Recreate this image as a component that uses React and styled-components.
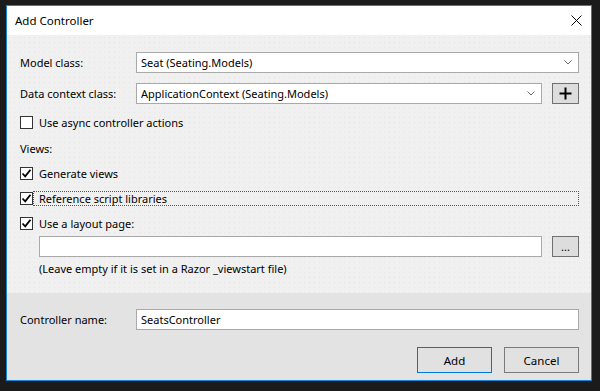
import { createGlobalStyle, styled } from 'styled-components';

const GlobalStyle = createGlobalStyle`
  html, body {
    margin: 0;
    padding: 0;
    background: #1b1b1b;
  }
  body {
    font-family: "Noto Sans", "Liberation Sans", sans-serif;
    font-size: 11px;
    color: #000;
  }
`;

const Screen = styled.div`
  width: 600px;
  height: 391px;
  padding: 5px 0 0 6px;
  box-sizing: border-box;
`;

const Dialog = styled.div`
  width: 586px;
  height: 376px;
  box-sizing: border-box;
  border: 1px solid #1883d7;
  display: flex;
  flex-direction: column;
  background: #f0f0f0;
`;

const TitleBar = styled.header`
  height: 29px;
  flex: none;
  background: #fff;
  display: flex;
  align-items: center;
  justify-content: space-between;
  padding: 0 9px 0 8px;
`;

const Title = styled.h1`
  margin: 0;
  font-size: 11.5px;
  font-weight: normal;
`;

const CloseButton = styled.button`
  width: 12px;
  height: 12px;
  padding: 0;
  border: none;
  background: none;
  display: flex;
  align-items: center;
  justify-content: center;
`;

const Body = styled.section`
  flex: 1;
  padding: 17px 12px 0 13px;
  background-color: #f0f0f0;
  background-image: radial-gradient(#e4e4e4 0.6px, transparent 0.7px);
  background-size: 5px 5px;
`;

const FieldRow = styled.div`
  display: grid;
  grid-template-columns: 106px 1fr ${(p) => (p.$withButton ? 'auto' : '')};
  column-gap: 10px;
  align-items: center;
  margin-bottom: ${(p) => p.$gap || 0}px;
`;

const Label = styled.label`
  white-space: nowrap;
`;

const TextBox = styled.div`
  height: 21px;
  box-sizing: border-box;
  border: 1px solid #a9a9a9;
  background: #fff;
  display: flex;
  align-items: center;
  justify-content: space-between;
  padding: 0 6px 0 4px;
  white-space: nowrap;
`;

const Chevron = styled.svg`
  width: 8px;
  height: 5px;
`;

const SmallButton = styled.button`
  width: 27px;
  height: 21px;
  box-sizing: border-box;
  border: 1px solid #707070;
  background: #dddddd;
  padding: 0;
  display: flex;
  align-items: center;
  justify-content: center;
  font-family: inherit;
  font-size: 11px;
  color: #000;
`;

const CheckRow = styled.div`
  display: flex;
  align-items: center;
  height: 15px;
  margin-bottom: ${(p) => p.$gap || 0}px;
`;

const Box = styled.span`
  width: 13px;
  height: 13px;
  flex: none;
  box-sizing: border-box;
  border: 1px solid #333;
  background: #fff;
  display: flex;
  align-items: center;
  justify-content: center;
`;

const CheckLabel = styled.span`
  flex: 1;
  height: 15px;
  box-sizing: border-box;
  display: flex;
  align-items: center;
  padding-left: 5px;
  border: 1px dotted ${(p) => (p.$focused ? '#555' : 'transparent')};
  white-space: nowrap;
`;

const Caption = styled.div`
  height: 15px;
  display: flex;
  align-items: center;
  margin-bottom: ${(p) => p.$gap || 0}px;
`;

const LayoutRow = styled.div`
  display: flex;
  gap: 10px;
  padding-left: 19px;
  margin-bottom: 4px;
`;

const Hint = styled.div`
  padding-left: 19px;
`;

const Footer = styled.footer`
  height: 87px;
  flex: none;
  background: #e3e3e3;
  padding: 16px 12px 0 13px;
  box-sizing: border-box;
`;

const ButtonBar = styled.div`
  display: flex;
  justify-content: flex-end;
  gap: 12px;
  margin-top: 17px;
`;

const DialogButton = styled.button`
  width: 75px;
  height: 26px;
  box-sizing: border-box;
  border: 1px solid ${(p) => (p.$primary ? '#0078d7' : '#7a7a7a')};
  background: #e1e1e1;
  font-family: inherit;
  font-size: 11.5px;
  color: #000;
  padding: 0;
`;

function Check() {
  return (
    <svg width="11" height="11" viewBox="0 0 11 11">
      <path d="M1.5 5.5 L4.2 8.3 L9.5 1.8" fill="none" stroke="#000" strokeWidth="1.8" />
    </svg>
  );
}

function CheckBox({ checked, focused, gap, children }) {
  return (
    <CheckRow $gap={gap}>
      <Box>{checked && <Check />}</Box>
      <CheckLabel $focused={focused}>{children}</CheckLabel>
    </CheckRow>
  );
}

function DownArrow() {
  return (
    <Chevron viewBox="0 0 8 5">
      <path d="M0.5 0.5 L4 4 L7.5 0.5" fill="none" stroke="#6d6d6d" strokeWidth="1" />
    </Chevron>
  );
}

export default function App() {
  return (
    <>
      <GlobalStyle />
      <Screen>
        <Dialog>
          <TitleBar>
            <Title>Add Controller</Title>
            <CloseButton>
              <svg width="11" height="11" viewBox="0 0 11 11">
                <path d="M0.5 0.5 L10.5 10.5 M10.5 0.5 L0.5 10.5" stroke="#000" strokeWidth="1" />
              </svg>
            </CloseButton>
          </TitleBar>
          <Body>
            <FieldRow $gap={10}>
              <Label>Model class:</Label>
              <TextBox>
                Seat (Seating.Models)
                <DownArrow />
              </TextBox>
            </FieldRow>
            <FieldRow $withButton $gap={11}>
              <Label>Data context class:</Label>
              <TextBox>
                ApplicationContext (Seating.Models)
                <DownArrow />
              </TextBox>
              <SmallButton>
                <svg width="13" height="13" viewBox="0 0 13 13">
                  <path d="M6.5 0.5 V12.5 M0.5 6.5 H12.5" stroke="#000" strokeWidth="2" />
                </svg>
              </SmallButton>
            </FieldRow>
            <CheckBox gap={11}>Use async controller actions</CheckBox>
            <Caption $gap={10}>Views:</Caption>
            <CheckBox checked gap={10}>Generate views</CheckBox>
            <CheckBox checked focused gap={10}>Reference script libraries</CheckBox>
            <CheckBox checked gap={5}>Use a layout page:</CheckBox>
            <LayoutRow>
              <TextBox style={{ flex: 1 }} />
              <SmallButton>...</SmallButton>
            </LayoutRow>
            <Hint>(Leave empty if it is set in a Razor _viewstart file)</Hint>
          </Body>
          <Footer>
            <FieldRow>
              <Label>Controller name:</Label>
              <TextBox>SeatsController</TextBox>
            </FieldRow>
            <ButtonBar>
              <DialogButton $primary>Add</DialogButton>
              <DialogButton>Cancel</DialogButton>
            </ButtonBar>
          </Footer>
        </Dialog>
      </Screen>
    </>
  );
}
